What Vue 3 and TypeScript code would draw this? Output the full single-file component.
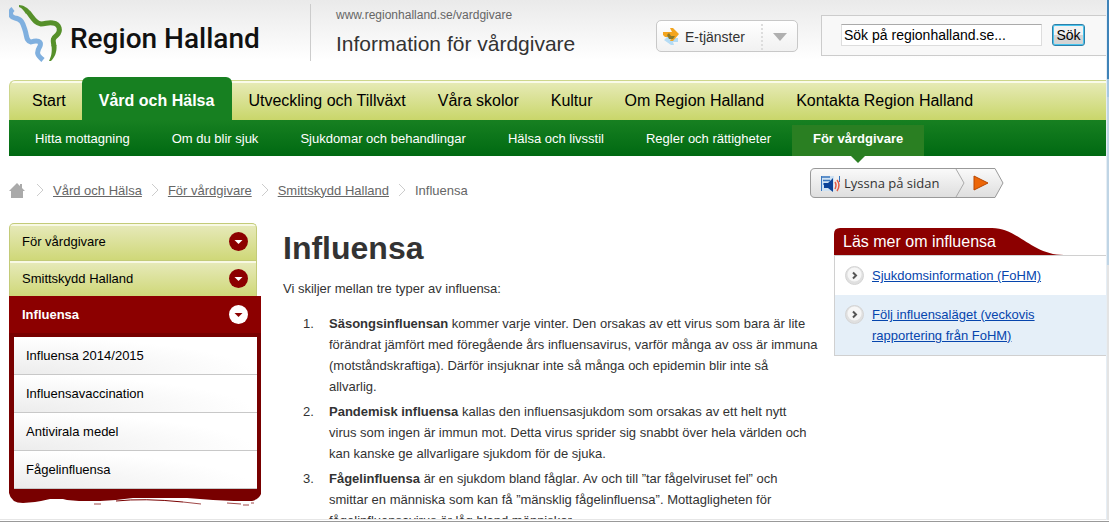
<script setup lang="ts">
import { ref } from 'vue'

interface NavItem {
  label: string
  active?: boolean
}

const mainNav: NavItem[] = [
  { label: 'Start' },
  { label: 'Vård och Hälsa', active: true },
  { label: 'Utveckling och Tillväxt' },
  { label: 'Våra skolor' },
  { label: 'Kultur' },
  { label: 'Om Region Halland' },
  { label: 'Kontakta Region Halland' },
]

const subNav: NavItem[] = [
  { label: 'Hitta mottagning' },
  { label: 'Om du blir sjuk' },
  { label: 'Sjukdomar och behandlingar' },
  { label: 'Hälsa och livsstil' },
  { label: 'Regler och rättigheter' },
  { label: 'För vårdgivare', active: true },
]

const crumbs: string[] = ['Vård och Hälsa', 'För vårdgivare', 'Smittskydd Halland']
const parents: string[] = ['För vårdgivare', 'Smittskydd Halland']
const children: string[] = ['Influensa 2014/2015', 'Influensavaccination', 'Antivirala medel', 'Fågelinfluensa']
const related: string[] = ['Sjukdomsinformation (FoHM)', 'Följ influensaläget (veckovis rapportering från FoHM)']

const types: { term: string; text: string }[] = [
  {
    term: 'Säsongsinfluensan',
    text: 'kommer varje vinter. Den orsakas av ett virus som bara är lite förändrat jämfört med föregående års influensavirus, varför många av oss är immuna (motståndskraftiga). Därför insjuknar inte så många och epidemin blir inte så allvarlig.',
  },
  {
    term: 'Pandemisk influensa',
    text: 'kallas den influensasjukdom som orsakas av ett helt nytt virus\u00a0som ingen är immun mot. Detta virus sprider sig snabbt över hela världen och kan kanske ge allvarligare sjukdom för de sjuka.',
  },
  {
    term: 'Fågelinfluensa',
    text: 'är en sjukdom bland fåglar. Av och till ”tar fågelviruset fel” och smittar en människa som kan få ”mänsklig fågelinfluensa”. Mottagligheten för fågelinfluensavirus är låg bland människor.',
  },
]

const query = ref('Sök på regionhalland.se...')
</script>

<template>
  <div class="window">
    <div class="page">
      <header class="header">
        <a class="logo" href="#" aria-label="Region Halland">
          <svg class="logo-mark" width="54" height="60" viewBox="0 0 54 60" fill="none" stroke-linejoin="round">
            <path d="M4 6C0 9 1 14 6 15C13 16 14 21 16 27C18 33 17 38 22 39C28 37 33 38 31 43C27 50 28 52 34 57" stroke="#80b0df" stroke-width="5" />
            <path d="M19 9C24 15 26 20 32 21C37 21 39 19 44 20C51 21 52 28 48 32C43 36 44 37 45 43" stroke="#56902a" stroke-width="5" />
            <path d="M10 2C14 2 19 5 21 8L17 11C15 8 13 5 10 4Z" fill="#56902a" />
            <path d="M42.500 42L47.500 42C48 49 46 54 42 58L40 58C43 52 43 48 42.500 42Z" fill="#56902a" />
          </svg>
          <span>Region Halland</span>
        </a>
        <div class="site">
          <span class="site-url">www.regionhalland.se/vardgivare</span>
          <span class="site-title">Information för vårdgivare</span>
        </div>
        <button class="services" type="button">
          <span class="services-label">
            <svg width="17" height="18" viewBox="0 0 17 18">
              <path d="M1 12L6 7L8 10H15V14H10L11 17H8Z" fill="#b5dcf5" />
              <path d="M7 0H10L16 6L10 13H7L9 9H2L0 7V4H9Z" fill="#f3a51f" />
              <path d="M4 7L6 5L8 8H12L10 11H6Z" fill="#8c7a2c" />
            </svg>
            E-tjänster
          </span>
          <span class="services-arrow"><svg width="14" height="8" viewBox="0 0 14 8"><path d="M0 0H14L7 8Z" fill="#b0b0b0" /></svg></span>
        </button>
        <form class="search" @submit.prevent>
          <input v-model="query" type="text" aria-label="Sök" />
          <button type="submit">Sök</button>
        </form>
      </header>

      <nav class="main-nav">
        <a v-for="item in mainNav" :key="item.label" href="#" :class="{ active: item.active }">{{ item.label }}</a>
      </nav>
      <nav class="sub-nav">
        <a v-for="item in subNav" :key="item.label" href="#" :class="{ active: item.active }">{{ item.label }}</a>
      </nav>

      <div class="trail">
        <nav class="crumbs">
          <a class="home" href="#" aria-label="Start">
            <svg width="16" height="15" viewBox="0 0 16 15"><path d="M8 0L0 8H2V15H14V8H16L13 5V1H11V3Z" fill="#aaa" /></svg>
          </a>
          <template v-for="crumb in crumbs" :key="crumb">
            <svg class="sep" width="8" height="14" viewBox="0 0 8 14"><path d="M1 1L7 7L1 13" fill="none" stroke="#ccc" /></svg>
            <a href="#">{{ crumb }}</a>
          </template>
          <svg class="sep" width="8" height="14" viewBox="0 0 8 14"><path d="M1 1L7 7L1 13" fill="none" stroke="#ccc" /></svg>
          <span>Influensa</span>
        </nav>
        <button class="listen" type="button">
          <svg class="listen-shape" width="194" height="30" viewBox="0 0 194 30">
            <defs>
              <linearGradient id="listenFill" x1="0" y1="0" x2="0" y2="1">
                <stop offset="0" stop-color="#fafafa" />
                <stop offset="1" stop-color="#dedede" />
              </linearGradient>
            </defs>
            <path d="M5 .5H185L193 15L185 29.500H5Q.5 29.500 .5 25V5Q.5 .5 5 .5Z" fill="url(#listenFill)" stroke="#999" />
            <path d="M146 1L154 15L146 29" fill="none" stroke="#aaa" />
            <path d="M164 8L178 15L164 22Z" fill="#ec6608" stroke="#b94700" />
            <path d="M11 8H24V23H11Z" fill="#cfe2f3" />
            <path d="M12 9H20M13 12.500H20M13 16H16" stroke="#3a76bd" stroke-width="1.500" />
            <path d="M11.500 8V23" stroke="#3a76bd" />
            <path d="M14 15H18L23 10V24L18 20H14Z" fill="#0b4398" />
            <path d="M25 14Q27 17 25 21M27 12Q31 17 27 23" fill="none" stroke="#e35c46" stroke-width="1.500" />
            <path d="M29.500 8V14" stroke="#3a76bd" />
          </svg>
          <span>Lyssna på sidan</span>
        </button>
      </div>

      <div class="columns">
        <aside class="side">
          <nav>
            <a v-for="item in parents" :key="item" class="parent" href="#">
              {{ item }}
              <svg width="19" height="19" viewBox="0 0 19 19"><circle cx="9.500" cy="9.500" r="9.500" fill="#8c0000" /><path d="M5.500 8H13.500L9.500 12Z" fill="#fff" /></svg>
            </a>
            <div class="current">
              <a class="current-head" href="#">
                Influensa
                <svg width="19" height="19" viewBox="0 0 19 19"><circle cx="9.500" cy="9.500" r="9.500" fill="#fff" /><path d="M5.500 8H13.500L9.500 12Z" fill="#8c0000" /></svg>
              </a>
              <div class="children">
                <a v-for="item in children" :key="item" href="#">{{ item }}</a>
              </div>
            </div>
            <svg class="brush" viewBox="0 0 252 18" preserveAspectRatio="none">
              <path d="M0 0H252V5Q250 10 243 12L225 12L204 11L178 9L151 9L124 9L107 11L91 12L70 12L58 11L54 10L41 10L32 12L26 13L14 14Q2 14 0 4Z" fill="#780000" />
              <path d="M107 12Q135 9 174 13" fill="none" stroke="#780000" />
              <path d="M85 15H92M174 13L192 15M218 14L232 15M234 16H240M242 14H245" fill="none" stroke="#a04848" />
            </svg>
          </nav>
        </aside>

        <main class="article">
          <h1>Influensa</h1>
          <p>Vi skiljer mellan tre typer av influensa:</p>
          <ol>
            <li v-for="item in types" :key="item.term"><strong>{{ item.term }}</strong> {{ item.text }}</li>
          </ol>
        </main>

        <aside class="related">
          <h2>
            <svg width="230" height="27" viewBox="0 0 230 27"><path d="M0 27V6Q0 0 6 0H158C184 0 198 27 230 27Z" fill="#8c0000" /></svg>
            <span>Läs mer om influensa</span>
          </h2>
          <ul>
            <li v-for="item in related" :key="item">
              <svg width="19" height="19" viewBox="0 0 19 19"><circle cx="9.500" cy="9.500" r="9" fill="#e0e0e0" stroke="#d4d4d4" /><circle cx="9.500" cy="8.500" r="7" fill="#f6f6f6" /><path d="M8 6.500L11 9.500L8 12.500" fill="none" stroke="#555" stroke-width="2" /></svg>
              <a href="#">{{ item }}</a>
            </li>
          </ul>
        </aside>
      </div>
    </div>
    <div class="scrollbar"></div>
  </div>
</template>

<style>
body {
  margin: 0;
}
</style>

<style scoped>
.window {
  box-sizing: border-box;
  display: flex;
  height: 100vh;
  overflow: hidden;
  padding-bottom: 3px;
  background: linear-gradient(#999, #999) 0 calc(100% - 1px) / 100% 1px no-repeat, #fff;
  font-family: "Liberation Sans", Arial, sans-serif;
  font-size: 13px;
  color: #333;
}
.window * {
  box-sizing: border-box;
}
.page {
  flex: 1;
  min-width: 0;
  overflow: hidden;
  padding-left: 8px;
  border-bottom: 1px solid #e6e6e6;
  background: linear-gradient(#eaeaea, #fff 60px);
}
.page > * {
  margin-left: 1px;
}
.scrollbar {
  width: 3px;
  background: linear-gradient(#3f83b8 0 79px, #a6c8e2 79px 97px, #c0d5e5 97px 265px, #e4e4e4 265px);
  border-left: 1px solid #e6eef5;
}
a {
  color: inherit;
  text-decoration: none;
}
button,
input {
  font: inherit;
}

.header {
  display: flex;
  align-items: flex-start;
  height: 80px;
}
.logo {
  display: flex;
  width: 302px;
  height: 57px;
  margin-top: 4px;
  border-right: 1px solid #ccc;
  font: 500 28px/70px Roboto, sans-serif;
  color: #111;
  white-space: nowrap;
}
.logo-mark {
  flex: none;
  margin: -1px 7px 0 0;
}
.site {
  display: flex;
  flex-direction: column;
  flex: 1;
  padding: 7px 0 0 25px;
  white-space: nowrap;
}
.site-url {
  font-size: 12px;
  line-height: 16px;
  color: #666;
}
.site-title {
  margin-top: 9px;
  font-size: 21px;
  line-height: 24px;
}
.services {
  display: flex;
  align-items: center;
  width: 142px;
  height: 32px;
  margin: 20px 23px 0 0;
  padding: 1px 0 0;
  border: 1px solid #c8c8c8;
  border-radius: 5px;
  background: linear-gradient(#fff, #f1f1f1);
  font-size: 14px;
  color: #333;
}
.services-label {
  display: flex;
  flex: 1;
  align-items: center;
  gap: 5px;
  padding-left: 6px;
}
.services-arrow {
  display: grid;
  place-items: center;
  width: 36px;
  height: 26px;
  border-left: 2px dotted #ddd;
}
.search {
  display: flex;
  align-items: flex-start;
  gap: 10px;
  width: 285px;
  height: 41px;
  margin-top: 15px;
  padding: 8px 0 0 19px;
  border: 1px solid #ccc;
  border-right: 0;
  background: #f8f8f8;
}
.search input {
  width: 201px;
  height: 22px;
  padding: 0 2px;
  border: 1px solid #ddd;
  border-top-color: #aaa;
  background: #fff;
  font-size: 14px;
  color: #000;
}
.search button {
  width: 33px;
  height: 22px;
  padding: 0;
  border: 1px solid #2d7fa8;
  border-radius: 3px;
  background: linear-gradient(#f2f2f2 50%, #d4d4d4 50%);
  box-shadow: inset 0 0 0 1px #48c4ee;
  font-size: 14px;
  line-height: 18px;
  color: #000;
}

.main-nav {
  display: flex;
  height: 40px;
  padding-left: 6px;
  border-top: 1px solid #cdd68c;
  border-left: 1px solid #cdd68c;
  border-radius: 6px 0 0 0;
  background: linear-gradient(#fafbea 0 2px, #e6eab5 2px, #c9d66a);
  font-size: 16px;
  line-height: 40px;
  color: #000;
  white-space: nowrap;
}
.main-nav a {
  padding: 0 16px;
}
.main-nav .active {
  margin-top: -4px;
  padding: 0 18px 0 17px;
  border-radius: 6px 6px 0 0;
  background: #178021;
  font-weight: bold;
  line-height: 48px;
  color: #fff;
}
.sub-nav {
  display: flex;
  height: 36px;
  padding: 5px 0 0 5px;
  background: linear-gradient(#178021, #006912);
  line-height: 28px;
  color: #fff;
  white-space: nowrap;
}
.sub-nav a {
  padding: 0 21px;
}
.sub-nav .active {
  position: relative;
  height: 31px;
  background: #2a7f22;
  font-weight: bold;
}
.sub-nav .active::after {
  content: "";
  position: absolute;
  top: 100%;
  left: 50%;
  margin-left: -7px;
  border: 7px solid transparent;
  border-top-color: #2a7f22;
  border-bottom: 0;
}

.trail {
  display: flex;
  align-items: flex-start;
  justify-content: space-between;
  height: 66px;
  padding: 12px 102px 0 0;
}
.crumbs {
  display: flex;
  align-items: center;
  gap: 9px;
  height: 44px;
  color: #666;
  white-space: nowrap;
}
.crumbs a {
  text-decoration: underline;
}
.home {
  margin-right: 2px;
}
.home svg {
  display: block;
}
.listen {
  position: relative;
  width: 194px;
  height: 30px;
  padding: 0 0 0 34px;
  border: 0;
  background: none;
  font: 13px/30px "Open Sans", sans-serif;
  color: #333;
  text-align: left;
  white-space: nowrap;
}
.listen-shape {
  position: absolute;
  inset: 0;
}
.listen span {
  position: relative;
}

.columns {
  display: flex;
  align-items: flex-start;
}
.side {
  flex: none;
  width: 252px;
  margin-top: 1px;
  color: #000;
}
.side a {
  display: flex;
  align-items: center;
  justify-content: space-between;
}
.parent {
  width: 248px;
  height: 37px;
  padding: 0 8px 0 12px;
  border: 1px solid #c3cb78;
  border-bottom: 0;
  background: linear-gradient(#f8f9e4 0 2px, #e6e9b8 2px, #cfd878);
}
.parent:first-child {
  padding-bottom: 2px;
  border-radius: 5px 5px 0 0;
}
.parent + .parent {
  height: 36px;
}
.current {
  background: #780000;
  padding: 0 4px 0 5px;
}
.current-head {
  height: 37px;
  margin: 0 -4px 0 -5px;
  padding: 0 13px;
  background: #8c0000;
  font-weight: bold;
  color: #fff;
}
.children {
  border-top: 4px solid #780000;
}
.side .children a {
  height: 38px;
  padding-left: 12px;
  border-bottom: 1px solid #c8c8c8;
  background: radial-gradient(ellipse at bottom left, #ececec, #fff 70%);
}
.brush {
  display: block;
  width: 100%;
  height: 18px;
}

.article {
  flex: 1;
  min-width: 0;
  padding: 7px 16px 0 22px;
  line-height: 21px;
}
h1 {
  margin: 0;
  font-size: 32px;
  line-height: 38px;
}
.article p {
  margin: 11px 0 14px;
}
ol {
  margin: 0;
  padding-left: 46px;
}
.article li {
  margin-bottom: 4px;
  padding-left: 0;
  list-style: none;
  counter-increment: item;
}
.article li::before {
  content: counter(item) ".";
  float: left;
  margin-left: -26px;
}

.related {
  flex: none;
  width: 272px;
  margin-top: 6px;
}
h2 {
  position: relative;
  height: 27px;
  margin: 0;
  padding-left: 9px;
  font-size: 16px;
  font-weight: normal;
  line-height: 27px;
  color: #fff;
}
h2 svg {
  position: absolute;
  inset: 0;
}
h2 span {
  position: relative;
}
ul {
  margin: 0;
  padding: 0;
  border: 1px solid #d0d0d0;
  border-right: 0;
  list-style: none;
}
.related li {
  display: flex;
  gap: 8px;
  padding: 9px 40px 9px 10px;
  line-height: 21px;
}
.related li:nth-child(2) {
  background: #e5eff8;
}
.related li svg {
  flex: none;
  margin-top: 1px;
}
.related li a {
  color: #0645ad;
  text-decoration: underline;
}
</style>
